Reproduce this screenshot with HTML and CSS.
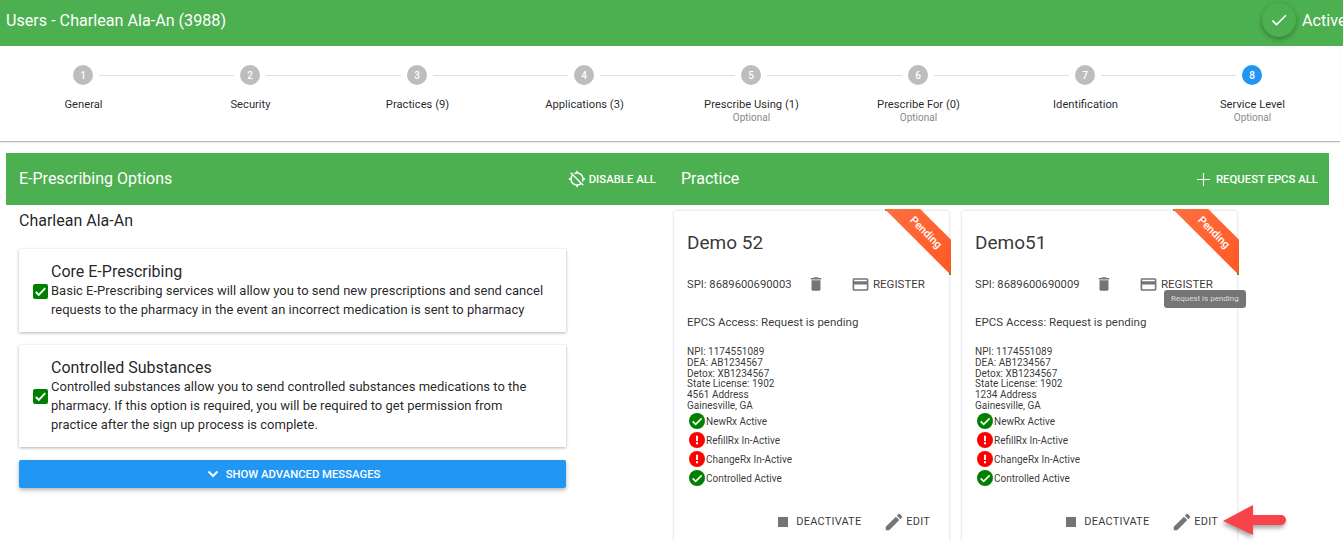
FILE: index.html
```html
<!DOCTYPE html>
<html lang="en">
<head>
    <meta charset="UTF-8">
    <title>Users - Charlean Ala-An (3988)</title>
    <link rel="stylesheet" href="styles.css">
</head>
<body>
    <svg class="defs">
        <symbol id="i-delete" viewBox="0 0 24 24"><path d="M6 19c0 1.1.9 2 2 2h8c1.1 0 2-.9 2-2V7H6v12zM19 4h-3.5l-1-1h-5l-1 1H5v2h14V4z"/></symbol>
        <symbol id="i-card" viewBox="0 0 24 24"><path d="M20 4H4c-1.11 0-1.99.89-1.99 2L2 18c0 1.11.89 2 2 2h16c1.11 0 2-.89 2-2V6c0-1.11-.89-2-2-2zm0 14H4v-6h16v6zm0-10H4V6h16v2z"/></symbol>
        <symbol id="i-stop" viewBox="0 0 24 24"><path d="M6 6h12v12H6z"/></symbol>
        <symbol id="i-edit" viewBox="0 0 24 24"><path d="M3 17.25V21h3.75L17.81 9.94l-3.75-3.75L3 17.25zM20.71 7.04c.39-.39.39-1.02 0-1.41l-2.34-2.34c-.39-.39-1.02-.39-1.41 0l-1.83 1.83 3.75 3.75 1.83-1.83z"/></symbol>
        <symbol id="i-ok" viewBox="0 0 24 24"><circle cx="12" cy="12" r="12" fill="#008000"/><path d="M5.5 12.5l4.5 4.5 9-9" fill="none" stroke="#fff" stroke-width="2.6"/></symbol>
        <symbol id="i-bad" viewBox="0 0 24 24"><circle cx="12" cy="12" r="12" fill="#f00"/><path d="M10.5 5.5h3v8h-3zM10.5 15.5h3v3h-3z" fill="#fff"/></symbol>
        <symbol id="i-check" viewBox="0 0 24 24"><path d="M9 16.17L4.83 12l-1.42 1.41L9 19 21 7l-1.41-1.41z"/></symbol>
    </svg>

    <header class="topbar">
        <div class="topbar-title">Users - Charlean Ala-An (3988)</div>
        <div class="topbar-status">
            <span class="fab"><svg class="icon"><use href="#i-check"/></svg></span>
            <span>Active</span>
        </div>
    </header>

    <nav class="stepper">
        <div class="step-track">
            <span class="dot">1</span><i></i>
            <span class="dot">2</span><i></i>
            <span class="dot">3</span><i></i>
            <span class="dot">4</span><i></i>
            <span class="dot">5</span><i></i>
            <span class="dot">6</span><i></i>
            <span class="dot">7</span><i></i>
            <span class="dot current">8</span>
        </div>
        <div class="step-labels">
            <div>General</div>
            <div>Security</div>
            <div>Practices (9)</div>
            <div>Applications (3)</div>
            <div>Prescribe Using (1)<small>Optional</small></div>
            <div>Prescribe For (0)<small>Optional</small></div>
            <div>Identification</div>
            <div>Service Level<small>Optional</small></div>
        </div>
    </nav>

    <section class="panel-bar">
        <div class="bar-half">
            <h2>E-Prescribing Options</h2>
            <a class="bar-action">
                <svg class="icon disable-icon" viewBox="0 0 24 24"><path d="M20.94 11c-.46-4.17-3.77-7.48-7.94-7.94V1h-2v2.06c-1.13.12-2.19.46-3.16.97l1.5 1.5C10.16 5.19 11.06 5 12 5c3.87 0 7 3.13 7 7 0 .94-.19 1.84-.52 2.65l1.5 1.5c.5-.96.84-2.02.97-3.15H23v-2h-2.06zM3 4.27l2.04 2.04C3.97 7.62 3.25 9.23 3.06 11H1v2h2.06c.46 4.17 3.77 7.48 7.94 7.94V23h2v-2.06c1.77-.2 3.38-.91 4.69-1.98L19.73 21 21 19.730 4.270 3 3 4.270zm13.270 13.270C15.090 18.450 13.610 19 12 19c-3.870 0-7-3.130-7-7 0-1.610.550-3.090 1.460-4.270l9.810 9.810z"/></svg>
                DISABLE ALL
            </a>
        </div>
        <div class="bar-half right">
            <h2>Practice</h2>
            <a class="bar-action">
                <svg class="icon plus-icon" viewBox="0 0 14 14"><path d="M6.400 0h1.200v14H6.400zM0 6.400h14v1.200H0z"/></svg>
                REQUEST EPCS ALL
            </a>
        </div>
    </section>

    <main class="content">
        <div class="options">
            <h3 class="person">Charlean Ala-An</h3>

            <div class="option-card">
                <span class="checkbox"><svg viewBox="0 0 16 16"><path d="M3 8.500l3.200 3.200L13 4.500" fill="none" stroke="#fff" stroke-width="2"/></svg></span>
                <div>
                    <h4>Core E-Prescribing</h4>
                    <p>Basic E-Prescribing services will allow you to send new prescriptions and send cancel requests to the pharmacy in the event an incorrect medication is sent to pharmacy</p>
                </div>
            </div>

            <div class="option-card">
                <span class="checkbox"><svg viewBox="0 0 16 16"><path d="M3 8.500l3.200 3.200L13 4.500" fill="none" stroke="#fff" stroke-width="2"/></svg></span>
                <div>
                    <h4>Controlled Substances</h4>
                    <p>Controlled substances allow you to send controlled substances medications to the pharmacy. If this option is required, you will be required to get permission from practice after the sign up process is complete.</p>
                </div>
            </div>

            <button class="advanced">
                <svg viewBox="0 0 12 8"><path d="M1.500 1.500L6 6l4.500-4.500" fill="none" stroke="#fff" stroke-width="2"/></svg>
                SHOW ADVANCED MESSAGES
            </button>
        </div>

        <div class="cards">
            <article class="card">
                <div class="ribbon-wrap"><div class="ribbon">Pending</div></div>
                <h3>Demo 52</h3>
                <div class="spi-row">
                    <span class="spi">SPI: 8689600690003</span>
                    <svg class="icon trash"><use href="#i-delete"/></svg>
                    <span class="register"><svg class="icon"><use href="#i-card"/></svg>REGISTER</span>
                </div>
                <p class="epcs">EPCS Access: Request is pending</p>
                <div class="details">NPI: 1174551089<br>DEA: AB1234567<br>Detox: XB1234567<br>State License: 1902<br>4561 Address<br>Gainesville, GA</div>
                <ul class="statuses">
                    <li><svg><use href="#i-ok"/></svg>NewRx Active</li>
                    <li><svg><use href="#i-bad"/></svg>RefillRx In-Active</li>
                    <li><svg><use href="#i-bad"/></svg>ChangeRx In-Active</li>
                    <li><svg><use href="#i-ok"/></svg>Controlled Active</li>
                </ul>
                <div class="card-actions">
                    <span class="stop"><svg class="icon"><use href="#i-stop"/></svg>DEACTIVATE</span>
                    <span class="edit"><svg class="icon"><use href="#i-edit"/></svg>EDIT</span>
                </div>
            </article>

            <article class="card">
                <div class="ribbon-wrap"><div class="ribbon">Pending</div></div>
                <h3>Demo51</h3>
                <div class="spi-row">
                    <span class="spi">SPI: 8689600690009</span>
                    <svg class="icon trash"><use href="#i-delete"/></svg>
                    <span class="register"><svg class="icon"><use href="#i-card"/></svg>REGISTER</span>
                </div>
                <div class="tooltip">Request is pending</div>
                <p class="epcs">EPCS Access: Request is pending</p>
                <div class="details">NPI: 1174551089<br>DEA: AB1234567<br>Detox: XB1234567<br>State License: 1902<br>1234 Address<br>Gainesville, GA</div>
                <ul class="statuses">
                    <li><svg><use href="#i-ok"/></svg>NewRx Active</li>
                    <li><svg><use href="#i-bad"/></svg>RefillRx In-Active</li>
                    <li><svg><use href="#i-bad"/></svg>ChangeRx In-Active</li>
                    <li><svg><use href="#i-ok"/></svg>Controlled Active</li>
                </ul>
                <div class="card-actions">
                    <span class="stop"><svg class="icon"><use href="#i-stop"/></svg>DEACTIVATE</span>
                    <span class="edit"><svg class="icon"><use href="#i-edit"/></svg>EDIT</span>
                </div>
                <svg class="arrow" viewBox="0 0 70 41"><path d="M3 21L33 5v10h28a5 5 0 0 1 0 10H33v10z" fill="#f7434a"/></svg>
            </article>
        </div>
    </main>
</body>
</html>
```

FILE: styles.css
```css
html, body {
    height: 541px;
    overflow: hidden;
}
body {
    margin: 0;
    background: #fff;
    color: rgba(0,0,0,0.87);
    font-family: Roboto, "Liberation Sans", sans-serif;
    font-size: 12px;
}
.defs {
    display: none;
}
.icon {
    width: 24px;
    height: 24px;
    fill: #757575;
    flex: none;
}

/* top bar */
.topbar {
    height: 46px;
    background: #4caf50;
    color: #fff;
    display: flex;
    align-items: center;
    justify-content: space-between;
    padding: 0 0 6px 6px;
    box-sizing: border-box;
    font-size: 16.150px;
    white-space: nowrap;
    overflow: hidden;
}
.topbar-title {
    padding-top: 1px;
}
.topbar-status {
    display: flex;
    align-items: center;
    gap: 6px;
    width: 81px;
    flex: none;
}
.fab {
    width: 34px;
    height: 34px;
    border-radius: 50%;
    background: #4caf50;
    box-shadow: 0 2px 5px rgba(0,0,0,0.3);
    display: flex;
    align-items: center;
    justify-content: center;
    flex: none;
}
.fab .icon {
    width: 20px;
    height: 20px;
    fill: #fff;
}

/* stepper */
.stepper {
    height: 96px;
    box-sizing: border-box;
    width: 1340px;
    border-bottom: 1px solid #bdbdbd;
    box-shadow: 0 1px 1px rgba(0,0,0,0.08);
    padding-top: 19px;
}
.step-track {
    display: flex;
    align-items: center;
    gap: 6px;
    padding: 0 78px 0 73px;
}
.step-track i {
    flex: 1;
    height: 1px;
    background: #e0e0e0;
}
.dot {
    width: 20px;
    height: 20px;
    border-radius: 50%;
    background: #bdbdbd;
    color: #fff;
    font-size: 10px;
    font-weight: 500;
    display: flex;
    align-items: center;
    justify-content: center;
    flex: none;
}
.dot.current {
    background: #2196f3;
}
.step-labels {
    display: grid;
    grid-template-columns: repeat(8, 167px);
    margin-top: 13px;
    text-align: center;
    font-size: 11.200px;
    line-height: 13px;
}
.step-labels small {
    display: block;
    font-size: 10px;
    line-height: 13px;
    color: #8a8a8a;
}

/* green bar */
.panel-bar {
    margin: 11px 14px 0 6px;
    height: 52px;
    background: #4caf50;
    color: #fff;
    display: flex;
}
.bar-half {
    display: flex;
    align-items: center;
    justify-content: space-between;
    padding: 0 9px 0 13px;
    width: 659px;
    box-sizing: border-box;
}
.bar-half.right {
    flex: 1;
    padding: 0 11px 0 16px;
}
.bar-half h2 {
    margin: 0 0 2px;
    font-size: 16px;
    font-weight: 400;
}
.bar-action {
    display: flex;
    align-items: center;
    gap: 3px;
    font-size: 11.350px;
    font-weight: 500;
}
.disable-icon {
    width: 18px;
    height: 18px;
    fill: #fff;
}
.plus-icon {
    width: 13px;
    height: 13px;
    fill: #fff;
    margin-right: 3px;
}

/* main */
.content {
    display: flex;
}
.options {
    width: 547px;
    margin-left: 19px;
    flex: none;
}
.person {
    margin: 7px 0 19px;
    font-size: 16px;
    line-height: 18px;
    font-weight: 400;
}
.option-card {
    display: flex;
    align-items: center;
    gap: 3px;
    padding: 14px 16px 13px 14px;
    margin-bottom: 13px;
    box-shadow: 0 1px 3px rgba(0,0,0,0.3);
    background: #fff;
}
.option-card h4 {
    margin: 0;
    font-size: 16px;
    line-height: 18px;
    font-weight: 400;
}
.option-card p {
    margin: 0;
    font-size: 13px;
    line-height: 19px;
}
.checkbox {
    width: 15px;
    height: 15px;
    border-radius: 2px;
    background: #008000;
    flex: none;
    display: flex;
}
.checkbox svg {
    width: 15px;
    height: 15px;
}
.advanced {
    display: flex;
    width: 100%;
    height: 28px;
    align-items: center;
    justify-content: center;
    gap: 7px;
    border: 0;
    padding: 0 0 0 2px;
    border-radius: 2px;
    background: #2196f3;
    color: #fff;
    font-family: inherit;
    font-size: 11.300px;
    font-weight: 500;
    box-shadow: 0 2px 4px rgba(0,0,0,0.3);
}
.advanced svg {
    width: 12px;
    height: 8px;
}

/* cards */
.cards {
    display: flex;
    gap: 13px;
    margin-left: 108px;
}
.card {
    position: relative;
    width: 275px;
    height: 340px;
    margin-top: 6px;
    padding: 0 13px;
    box-sizing: border-box;
    border-radius: 2px;
    box-shadow: 0 0 3px rgba(0,0,0,0.2);
    font-size: 11.250px;
    color: rgba(0,0,0,0.8);
}
.card h3 {
    margin: 0;
    padding-top: 21px;
    font-size: 19px;
    line-height: 22px;
    font-weight: 400;
}
.ribbon-wrap {
    position: absolute;
    top: -2px;
    right: -2px;
    width: 66px;
    height: 66px;
    overflow: hidden;
}
.ribbon-wrap::before, .ribbon-wrap::after {
    content: "";
    position: absolute;
    width: 2px;
    height: 2px;
    background: #6b8e23;
}
.ribbon-wrap::before {
    top: 0;
    left: 0;
}
.ribbon-wrap::after {
    right: 0;
    bottom: 0;
}
.ribbon {
    position: absolute;
    top: 11px;
    left: -7px;
    width: 96px;
    height: 25px;
    line-height: 25px;
    transform: rotate(45deg);
    background: linear-gradient(90deg, #ff7043, #ff5722);
    color: #fff;
    text-align: center;
    font-size: 11px;
    font-weight: 500;
}
.spi-row {
    display: flex;
    align-items: center;
    margin-top: 18px;
    height: 24px;
}
.spi {
    width: 120px;
    flex: none;
}
.trash {
    width: 18px;
    height: 18px;
    margin-right: 26px;
}
.register {
    display: flex;
    align-items: center;
    gap: 3px;
    font-size: 11.500px;
}
.register .icon {
    width: 19px;
    height: 19px;
}
.epcs {
    margin: 20px 0 0;
    line-height: 13px;
    font-size: 11.500px;
}
.details {
    margin-top: 18px;
    line-height: 10.800px;
    font-size: 10px;
}
.statuses {
    list-style: none;
    margin: 0 0 0 2px;
    padding: 0;
    font-size: 10px;
}
.statuses li {
    display: flex;
    align-items: center;
    gap: 1px;
    height: 19px;
}
.statuses svg {
    width: 16px;
    height: 16px;
}
.card-actions {
    display: flex;
    justify-content: flex-end;
    gap: 22px;
    margin-top: 23px;
    padding-right: 6px;
    font-size: 11px;
    letter-spacing: 0.2px;
}
.card-actions span {
    display: flex;
    align-items: center;
    gap: 3px;
}
.card-actions .edit {
    gap: 1px;
}
.card-actions .stop .icon {
    width: 20px;
    height: 20px;
}
.card-actions .edit .icon {
    width: 22px;
    height: 22px;
}
.tooltip {
    position: absolute;
    top: 79px;
    left: 202px;
    padding: 0 7px;
    height: 18px;
    line-height: 18px;
    white-space: nowrap;
    border-radius: 3px;
    background: #757575;
    color: #ddd;
    font-size: 8px;
}
.arrow {
    position: absolute;
    top: 289px;
    left: 258px;
    width: 70px;
    height: 41px;
    filter: drop-shadow(-1px 3px 2px rgba(0,0,0,0.35));
}
```
